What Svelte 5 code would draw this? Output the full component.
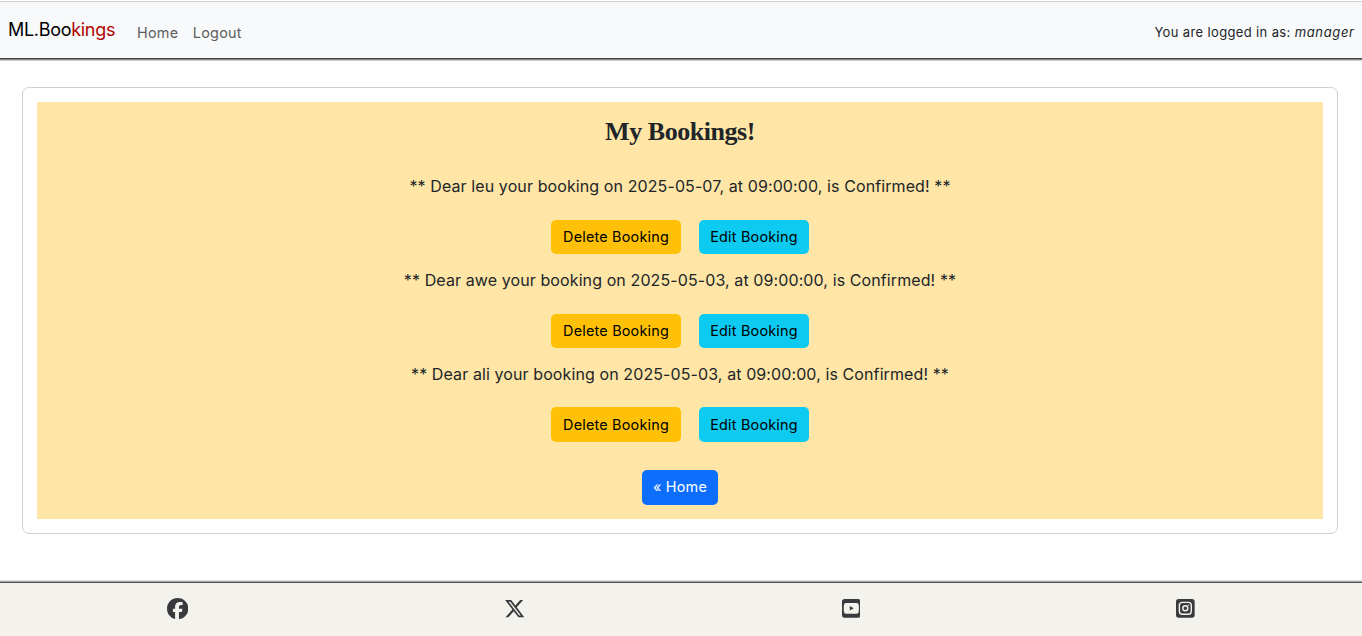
<script>
  const bookings = [
    { name: 'leu', date: '2025-05-07', time: '09:00:00' },
    { name: 'awe', date: '2025-05-03', time: '09:00:00' },
    { name: 'ali', date: '2025-05-03', time: '09:00:00' }
  ];
</script>

<div class="page">
  <header>
    <a class="brand" href="#home">ML.Boo<span>kings</span></a>
    <nav>
      <a href="#home">Home</a>
      <a href="#logout">Logout</a>
    </nav>
    <p class="user">You are logged in as: <em>manager</em></p>
  </header>

  <main>
    <section class="card">
      <div class="panel">
        <h1>My Bookings!</h1>
        {#each bookings as b}
          <article>
            <p>** Dear {b.name} your booking on {b.date}, at {b.time}, is Confirmed! **</p>
            <div class="actions">
              <button class="delete">Delete Booking</button>
              <button class="edit">Edit Booking</button>
            </div>
          </article>
        {/each}
        <a class="back" href="#home">« Home</a>
      </div>
    </section>
  </main>

  <footer>
    <a href="#facebook" aria-label="Facebook">
      <svg width="21.33" height="21.33" viewBox="0 0 512 512"><path d="M512 256C512 114.6 397.4 0 256 0S0 114.6 0 256C0 376 82.7 476.8 194.2 504.5V334.2H141.4V256h52.8V222.3c0-87.1 39.4-127.5 125-127.5c16.2 0 44.2 3.2 55.7 6.4V172c-6-.6-16.5-1-29.6-1c-42 0-58.2 15.9-58.2 57.2V256h83.6l-14.4 78.2H287V510.1C413.8 494.8 512 386.9 512 256z" /></svg>
    </a>
    <a href="#x" aria-label="X">
      <svg width="21.33" height="21.33" viewBox="0 0 512 512"><path d="M389.2 48h70.6L305.6 224.2 487 464H345L233.7 318.6 106.5 464H35.8L200.7 275.5 26.8 48H172.4L272.9 180.9 389.2 48zM364.4 421.8h39.1L151.1 88h-42L364.4 421.8z" /></svg>
    </a>
    <a href="#youtube" aria-label="YouTube">
      <svg width="18.67" height="18.67" viewBox="0 0 448 448"><path fill-rule="evenodd" d="M64 0H384a64 64 0 0 1 64 64V384a64 64 0 0 1-64 64H64a64 64 0 0 1-64-64V64A64 64 0 0 1 64 0ZM96 94Q52 94 47 138Q37 224 47 310Q52 354 96 354H352Q396 354 401 310Q411 224 401 138Q396 94 352 94ZM186.700 170.100L282.100 224.200L186.700 278.400Z" /></svg>
    </a>
    <a href="#instagram" aria-label="Instagram">
      <svg width="18.67" height="18.67" viewBox="0 0 448 448"><rect width="448" height="448" rx="64" /><rect class="line" x="81" y="81" width="286" height="286" rx="70" /><circle class="line" cx="224" cy="224" r="60" /><circle class="dot" cx="300" cy="148" r="17" /></svg>
    </a>
  </footer>
</div>

<style>
  :global(body) { margin: 0; background: #fff; }
  .page {
    box-sizing: border-box;
    height: 636px;
    padding-top: 1px;
    display: flex;
    flex-direction: column;
    overflow: hidden;
    font-family: Inter, sans-serif;
    color: #212529;
  }
  a { text-decoration: none; color: inherit; }
  p, h1 { margin: 0; }
  header {
    box-sizing: border-box;
    height: 58px;
    flex: none;
    display: flex;
    align-items: center;
    padding: 3px 8px 0;
    border-top: 1px solid #ccc;
    border-bottom: 1px solid #444549;
    background: #f8f9fa;
    box-shadow: 0 1px #858688, 0 2px #d0d0d0;
  }
  .brand { width: 129px; color: #000; font-size: 18px; letter-spacing: -0.3px; line-height: 27px; margin-top: -4px; white-space: nowrap; }
  .brand span { color: #b00000; }
  nav { display: flex; gap: 14.5px; margin-top: 2px; font-size: 14.4px; letter-spacing: 0.25px; color: #5c5d5e; line-height: 22px; }
  .user { margin-left: auto; font-size: 13px; letter-spacing: 0.36px; white-space: nowrap; }
  .user em { letter-spacing: 0.65px; margin-right: -0.6px; }
  main { flex: 1; padding: 28px 24px 0 22px; }
  .card { box-sizing: border-box; height: 447px; padding: 14px; border: 1px solid #d0d0d0; border-radius: 7px; }
  .panel {
    box-sizing: border-box;
    height: 417px;
    padding-top: 14px;
    display: flex;
    flex-direction: column;
    align-items: center;
    background: #ffe5a6;
  }
  h1 { font: bold 26px/32px "Liberation Serif", serif; letter-spacing: -0.45px; margin-bottom: 26.2px; white-space: nowrap; }
  article { height: 93.7px; display: flex; flex-direction: column; align-items: center; }
  article p { font-size: 16px; letter-spacing: 0.1px; line-height: 24px; margin-bottom: 21.8px; white-space: nowrap; }
  .actions { display: flex; gap: 18px; }
  button, .back {
    box-sizing: border-box;
    height: 34.4px;
    padding: 0;
    border: 0;
    border-radius: 5px;
    font: 14.4px/34px Inter, sans-serif;
    letter-spacing: 0.2px;
    text-align: center;
    white-space: nowrap;
    color: #000;
  }
  .delete { width: 130px; background: #ffc107; }
  .edit { width: 110px; background: #0dcaf0; }
  .back { width: 76px; height: 35px; margin-top: 14.7px; background: #0d6efd; color: #fff; }
  footer {
    box-sizing: border-box;
    height: 54px;
    flex: none;
    display: flex;
    align-items: center;
    justify-content: space-around;
    padding: 0 9px 1.4px;
    border-top: 1px solid #545454;
    background: #f3f2ed;
    box-shadow: 0 -1px #aaa, 0 -2px #ddd;
  }
  footer a { display: flex; }
  svg { display: block; fill: #383a3d; }
  .line { fill: none; stroke: #f3f2ed; stroke-width: 34; }
  .dot { fill: #f3f2ed; }
</style>
